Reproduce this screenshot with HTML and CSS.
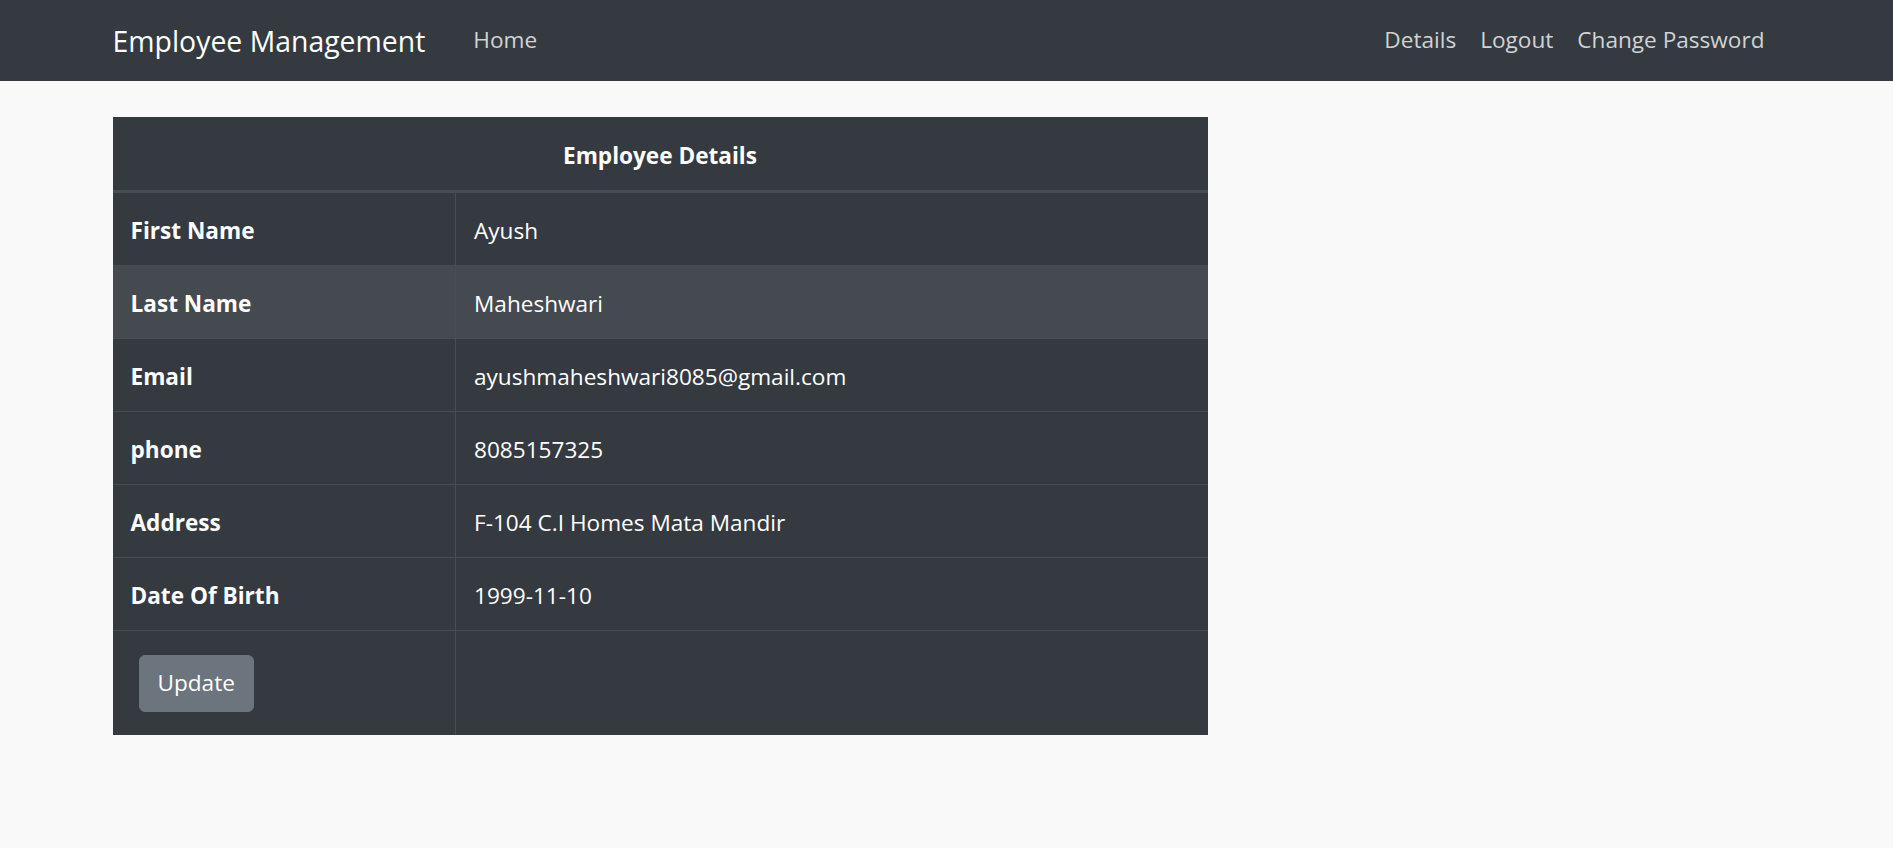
FILE: index.html
```html
<!DOCTYPE html>
<html lang="en">
<head>
<meta charset="utf-8">
<title>Employee Management</title>
<link rel="stylesheet" href="styles.css">
</head>
<body>
<nav class="navbar">
  <div class="nav-container">
    <a class="brand" href="#">Employee Management</a>
    <ul class="nav-left">
      <li><a class="nav-link" href="#">Home</a></li>
    </ul>
    <ul class="nav-right">
      <li><a class="nav-link" href="#">Details</a></li>
      <li><a class="nav-link" href="#">Logout</a></li>
      <li><a class="nav-link" href="#">Change Password</a></li>
    </ul>
  </div>
</nav>
<main class="container">
  <div class="col">
    <table class="details">
      <thead>
        <tr><th colspan="2" class="title">Employee Details</th></tr>
      </thead>
      <tbody>
        <tr><th>First Name</th><td>Ayush</td></tr>
        <tr class="stripe"><th>Last Name</th><td>Maheshwari</td></tr>
        <tr><th>Email</th><td>ayushmaheshwari8085@gmail.com</td></tr>
        <tr><th>phone</th><td>8085157325</td></tr>
        <tr><th>Address</th><td>F-104 C.I Homes Mata Mandir</td></tr>
        <tr><th>Date Of Birth</th><td>1999-11-10</td></tr>
        <tr class="action-row"><td><button class="btn" type="button">Update</button></td><td></td></tr>
      </tbody>
    </table>
  </div>
</main>
</body>
</html>
```

FILE: styles.css
```css
* { box-sizing: border-box; }
html, body { margin: 0; padding: 0; }
body {
  background: #f9f9f9;
  font-family: "Open Sans", "Noto Sans", "Liberation Sans", sans-serif;
  font-size: 22.6px;
  color: #212529;
}
.navbar {
  background: #343a40;
  height: 81px;
  display: flex;
  align-items: center;
}
.nav-container {
  width: 1710px;
  margin: 0 auto;
  padding: 0 25px 0 21px;
  display: flex;
  align-items: center;
}
.brand {
  color: #fff;
  text-decoration: none;
  font-size: 28.4px;
  margin-right: 36px;
  line-height: 40px;
}
.nav-left, .nav-right {
  list-style: none;
  margin: 0;
  padding: 0;
  display: flex;
}
.nav-right { margin-left: auto; }
.nav-link {
  display: block;
  padding: 0 12px;
  color: rgba(255,255,255,.78);
  text-decoration: none;
  line-height: 40px;
  margin-top: -1px;
}
.container {
  width: 1710px;
  margin: 0 auto;
  padding: 36px 21px 0;
}
.col { width: 1095px; }
.details {
  width: 1095px;
  border-collapse: collapse;
  background: #343a40;
  color: #fff;
}
.details th, .details td {
  padding: 20px 18px 16px;
  line-height: 36px;
  border-top: 1px solid #454d55;
  text-align: left;
  vertical-align: top;
}
.details tbody th { width: 343px; font-weight: 700; border-right: 1px solid #454d55; }
.details tbody td:first-child { border-right: 1px solid #454d55; }
.details .title {
  text-align: center;
  font-weight: 700;
  border-top: 0;
  border-bottom: 3px solid #454d55;
  padding: 21px 18px 15px;
  height: 74px;
}
.details .stripe { background: #454950; }
.action-row td { padding: 24px 18px 23px; }
.btn {
  margin-left: 8px;
  background: #6c757d;
  color: #fff;
  border: 1px solid #6c757d;
  border-radius: 6px;
  font-family: inherit;
  font-size: 22.6px;
  line-height: 36px;
  padding: 9px 18px;
  height: 57px;
  display: block;
}
```
